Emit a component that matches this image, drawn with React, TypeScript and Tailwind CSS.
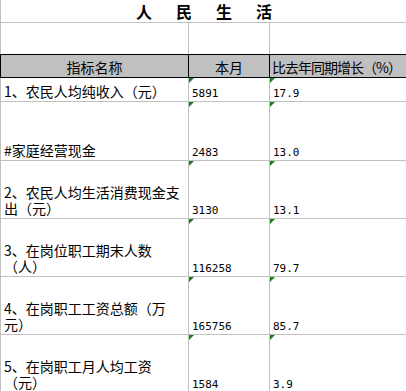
const rows = [
  { name: '1、农民人均纯收入（元）', value: '5891', growth: '17.9', h: 'h-[24px]' },
  { name: '#家庭经营现金', value: '2483', growth: '13.0', h: 'h-[59px]' },
  { name: '2、农民人均生活消费现金支出（元）', value: '3130', growth: '13.1', h: 'h-[58px]' },
  { name: '3、在岗位职工期末人数（人）', value: '116258', growth: '79.7', h: 'h-[58px]' },
  { name: '4、在岗职工工资总额（万元）', value: '165756', growth: '85.7', h: 'h-[58px]' },
  { name: '5、在岗职工月人均工资（元）', value: '1584', growth: '3.9', h: 'h-[58px]' },
]

const Flag = () => (
  <svg className="absolute left-0 top-0" width="5" height="5" viewBox="0 0 5 5">
    <polygon points="0,0 5,0 0,5" fill="#1e7b1e" />
  </svg>
)

const NumCell = ({ text, last }: { text: string; last?: boolean }) => (
  <div
    className={`relative flex items-end pl-[3px] font-['DejaVu_Sans_Mono',monospace] text-[11px] leading-[14px] ${
      last ? '' : 'border-r border-[#c0c0c0]'
    }`}
  >
    <Flag />
    {text}
  </div>
)

export default function App() {
  return (
    <div className="w-[406px] h-[391px] overflow-hidden bg-white text-black font-['Noto_Sans_CJK_SC',sans-serif] text-[14px]">
      <div className="flex h-[23px] items-center justify-center border-b border-l border-[#c0c0c0] pl-[1px] text-[16px] font-bold leading-none">
        {['人', '民', '生', '活'].map((c) => (
          <span key={c} className="w-[40px] text-center">
            {c}
          </span>
        ))}
      </div>
      <div className="grid h-[31px] grid-cols-[188px_81px_1fr] border-l border-[#c0c0c0]">
        <div className="border-r border-[#c0c0c0]" />
        <div className="border-r border-[#c0c0c0]" />
        <div />
      </div>
      <div className="grid h-[24px] grid-cols-[188px_81px_1fr] grid-rows-[22px] overflow-hidden whitespace-nowrap border-y border-l border-black bg-[#c0c0c0] leading-[16px]">
        <div className="flex items-center justify-center border-r border-black pt-[2px]">指标名称</div>
        <div className="flex items-center justify-center border-r border-black pt-[2px]">本月</div>
        <div className="flex items-center pl-[2px] pt-[2px] tracking-[-1px]">比去年同期增长（%）</div>
      </div>
      {rows.map((r) => (
        <div
          key={r.name}
          className={`grid grid-cols-[188px_81px_1fr] border-b border-l border-[#c0c0c0] ${r.h}`}
        >
          <div className="flex items-end border-r border-[#c0c0c0] px-[3px] pb-[2px] leading-[16px]">
            <span>{r.name}</span>
          </div>
          <NumCell text={r.value} />
          <NumCell text={r.growth} last />
        </div>
      ))}
    </div>
  )
}
